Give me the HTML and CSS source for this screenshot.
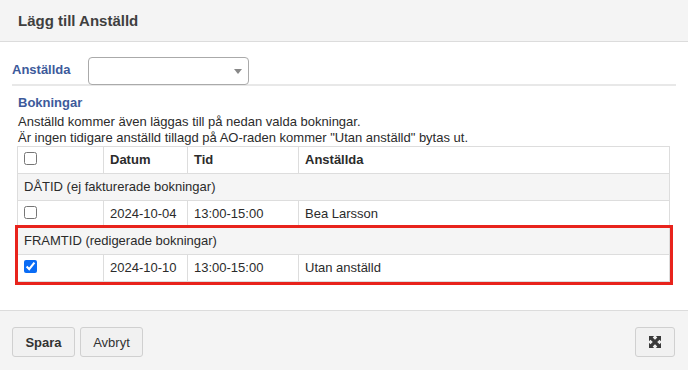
FILE: index.html
```html
<!DOCTYPE html>
<html lang="sv">
<head>
  <meta charset="UTF-8">
  <title>Lägg till Anställd</title>
  <link rel="stylesheet" href="styles.css">
</head>
<body>
  <div class="modal">
    <div class="modal-header">
      <h3>Lägg till Anställd</h3>
    </div>
    <div class="modal-body">
      <div class="field">
        <label class="field-label">Anställda</label>
        <div class="select"><span class="caret"></span></div>
      </div>
      <div class="bookings">
        <div class="section-title">Bokningar</div>
        <p class="info">Anställd kommer även läggas till på nedan valda bokningar.<br>Är ingen tidigare anställd tillagd på AO-raden kommer "Utan anställd" bytas ut.</p>
        <table class="grid">
          <colgroup>
            <col class="c-check"><col class="c-date"><col class="c-time"><col>
          </colgroup>
          <thead>
            <tr><th><input type="checkbox"></th><th>Datum</th><th>Tid</th><th>Anställda</th></tr>
          </thead>
          <tbody>
            <tr class="group"><td colspan="4">DÅTID (ej fakturerade bokningar)</td></tr>
            <tr><td><input type="checkbox"></td><td>2024-10-04</td><td>13:00-15:00</td><td>Bea Larsson</td></tr>
          </tbody>
          <tbody class="marked">
            <tr class="group"><td colspan="4">FRAMTID (redigerade bokningar)</td></tr>
            <tr><td><input type="checkbox" checked></td><td>2024-10-10</td><td>13:00-15:00</td><td>Utan anställd</td></tr>
          </tbody>
        </table>
      </div>
    </div>
    <div class="modal-footer">
      <button class="btn btn-primary">Spara</button>
      <button class="btn">Avbryt</button>
      <button class="btn btn-icon" title="Helskärm">
        <svg width="12" height="12" viewBox="0 0 14 14">
          <path d="M0 0h6L4.3 1.7 7 4.4l2.7-2.7L8 0h6v6l-1.7-1.7L9.6 7l2.7 2.7L14 8v6H8l1.7-1.7L7 9.6l-2.7 2.7L6 14H0V8l1.7 1.7L4.4 7 1.7 4.3 0 6z" fill="#3a3a3a"/>
        </svg>
      </button>
    </div>
  </div>
</body>
</html>
```

FILE: styles.css
```css
* {
  box-sizing: border-box;
}
body {
  margin: 0;
  font-family: "Liberation Sans", Arial, sans-serif;
  font-size: 13px;
  color: #2b2b2b;
  background: #fff;
}
.modal {
  display: flex;
  flex-direction: column;
  height: 370px;
}
.modal-header {
  background: #f4f4f4;
  border-bottom: 1px solid #dcdcdc;
  height: 42px;
  flex: none;
  display: flex;
  align-items: center;
  padding: 0 18px 1px 18px;
}
.modal-header h3 {
  margin: 0;
  font-size: 15px;
  font-weight: bold;
  color: #3f3f3f;
}
.modal-body {
  flex: 1;
  padding: 15px 12px 0 12px;
}
.field {
  display: flex;
  align-items: center;
  gap: 17px;
  border-bottom: 2px solid #e8e8e8;
  height: 29px;
}
.field-label {
  font-size: 13px;
  font-weight: bold;
  color: #3d5a9b;
  padding-bottom: 2px;
}
.select {
  position: relative;
  width: 161px;
  height: 28px;
  border: 1px solid #aaa;
  border-radius: 4px;
  background: #fff;
  align-self: flex-start;
}
.caret {
  position: absolute;
  right: 6px;
  top: 11px;
  border-left: 4px solid transparent;
  border-right: 4px solid transparent;
  border-top: 5px solid #888;
}
.bookings {
  padding: 9px 6px 0 5px;
}
.section-title {
  font-size: 13px;
  font-weight: bold;
  color: #3d5a9b;
  line-height: 16px;
  padding-left: 1px;
}
.info {
  margin: 3px 0 0 1px;
  line-height: 16px;
}
.grid {
  width: 653px;
  border-collapse: collapse;
  table-layout: fixed;
}
.c-check { width: 86px; }
.c-date { width: 84px; }
.c-time { width: 111px; }
.grid th,
.grid td {
  border: 1px solid #ddd;
  padding: 5px 6px;
  line-height: 16px;
  text-align: left;
  vertical-align: middle;
  white-space: nowrap;
}
.grid th {
  font-weight: bold;
}
.grid tr.group td {
  background: #f5f5f5;
}
.grid input[type=checkbox] {
  margin: 0;
  width: 13px;
  height: 13px;
  accent-color: #0a6cf5;
  vertical-align: top;
}
.grid tbody.marked {
  outline: 3px solid #e8231c;
  outline-offset: 0;
}
.modal-footer {
  background: #f4f4f4;
  border-top: 1px solid #dcdcdc;
  height: 60px;
  flex: none;
  display: flex;
  align-items: flex-start;
  gap: 5px;
  padding: 16px 13px 0 12px;
}
.btn {
  height: 30px;
  width: 63px;
  border: 1px solid #d0d0d0;
  border-radius: 3px;
  background: #f1f1f1;
  font-family: inherit;
  font-size: 13px;
  color: #333;
  padding: 0;
}
.btn-primary {
  font-weight: bold;
}
.btn-icon {
  margin-left: auto;
  width: 40px;
  display: flex;
  align-items: center;
  justify-content: center;
}
```
